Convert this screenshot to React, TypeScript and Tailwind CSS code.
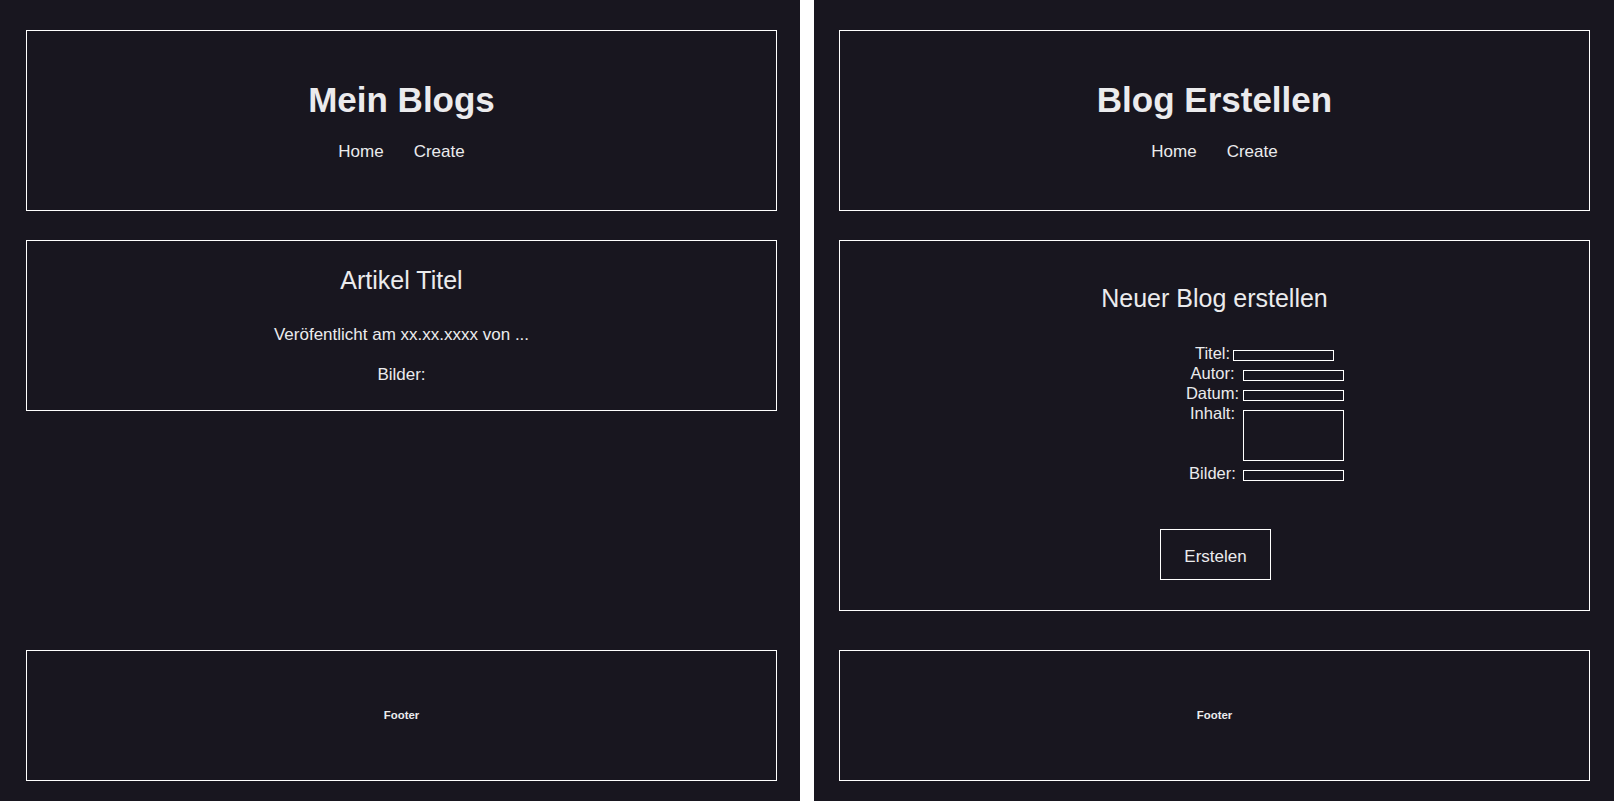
import React from "react";

const font = { fontFamily: '"Liberation Sans", Arial, sans-serif' };

function Header({ title }: { title: string }) {
  return (
    <header className="w-[751px] h-[181px] border border-white flex flex-col items-center justify-center gap-[22px] pt-[1px]">
      <h1 className="text-[35px] leading-[40px] font-bold">{title}</h1>
      <nav className="flex gap-[30px] text-[17px] leading-[20px]">
        <a>Home</a>
        <a>Create</a>
      </nav>
    </header>
  );
}

function Footer() {
  return (
    <footer className="w-[751px] h-[131px] border border-white flex items-center justify-center pb-[2px]">
      <h6 className="text-[11.4px] leading-[14px] font-bold">Footer</h6>
    </footer>
  );
}

function Field({ label, tall, shift }: { label: string; tall?: boolean; shift?: boolean }) {
  return (
    <>
      <div className="text-center text-[16.5px] leading-[20px] h-[20px] whitespace-nowrap">{label}</div>
      <div className={tall ? "h-[60px]" : "h-[20px]"}>
        {tall ? (
          <textarea className="block mt-[7px] w-[101px] h-[51px] border border-white bg-transparent resize-none outline-none" />
        ) : (
          <input
            className={`block mt-[7px] w-[101px] h-[11px] border border-white bg-transparent outline-none ${shift ? "-ml-[10px]" : ""}`}
          />
        )}
      </div>
    </>
  );
}

function LeftPanel() {
  return (
    <div className="w-[800px] h-[801px] bg-[#18161f] text-[#ebebed] pl-[26px] pt-[30px] flex flex-col" style={font}>
      <Header title="Mein Blogs" />
      <section className="mt-[29px] w-[751px] h-[171px] border border-white flex flex-col items-center pt-[25px]">
        <h2 className="text-[25px] leading-[28px]">Artikel Titel</h2>
        <p className="mt-[31px] text-[17px] leading-[20px]">Veröfentlicht am xx.xx.xxxx von ...</p>
        <p className="mt-[20px] text-[17px] leading-[20px]">Bilder:</p>
      </section>
      <div className="mt-auto mb-[20px]">
        <Footer />
      </div>
    </div>
  );
}

function RightPanel() {
  return (
    <div className="w-[800px] h-[801px] bg-[#18161f] text-[#ebebed] pl-[25px] pt-[30px] flex flex-col" style={font}>
      <Header title="Blog Erstellen" />
      <section className="mt-[29px] w-[751px] h-[371px] border border-white flex flex-col pt-[43px]">
        <h2 className="text-center text-[25px] leading-[28px]">Neuer Blog erstellen</h2>
        <div className="mt-[31px] ml-[342px] grid grid-cols-[61px_101px]">
          <Field label="Titel:" shift />
          <Field label="Autor:" />
          <Field label="Datum:" />
          <Field label="Inhalt:" tall />
          <Field label="Bilder:" />
        </div>
        <div className="mt-[46px] flex justify-center pl-[2px]">
          <button className="w-[111px] h-[51px] border border-white bg-transparent text-[17px] leading-[20px] pt-[4px] flex items-center justify-center text-[#ebebed]">
            Erstelen
          </button>
        </div>
      </section>
      <div className="mt-auto mb-[20px]">
        <Footer />
      </div>
    </div>
  );
}

export default function App() {
  return (
    <div className="w-[1614px] h-[801px] bg-white flex gap-[14px] overflow-hidden">
      <LeftPanel />
      <RightPanel />
    </div>
  );
}
